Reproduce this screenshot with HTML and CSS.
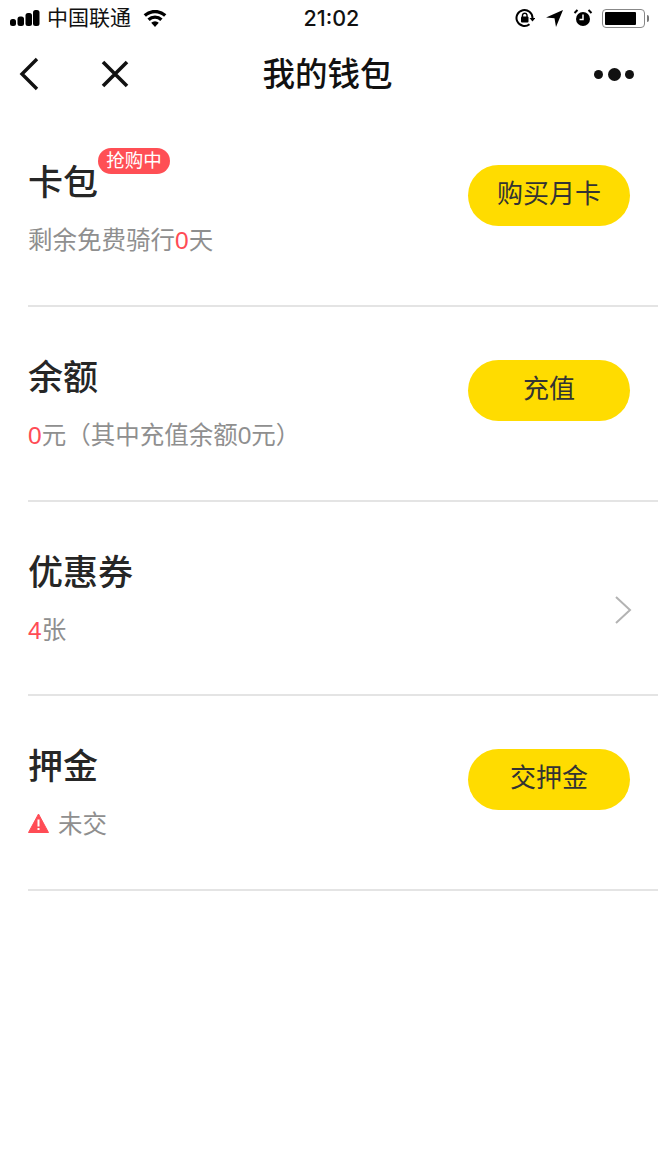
FILE: index.html
```html
<!DOCTYPE html>
<html lang="zh">
<head>
<meta charset="utf-8">
<title>我的钱包</title>
<link rel="stylesheet" href="styles.css">
</head>
<body>
<div class="status">
  <div class="status-left">
    <svg class="signal" width="34" height="16" viewBox="0 0 34 16"><rect x="0" y="9" width="6" height="7" rx="2.5"/><rect x="7.500" y="6.500" width="6.500" height="9.500" rx="2.500"/><rect x="15.500" y="3" width="6.500" height="13" rx="2.500"/><rect x="23" y="0" width="6.500" height="16" rx="2.500"/></svg>
    <span class="carrier">中国联通</span>
    <svg class="wifi" width="26" height="17" viewBox="0 0 26 18"><path d="M13 18l-4-4.600a5.800 5.800 0 0 1 8 0z"/><path d="M7.400 11.600 5 9a11.600 11.600 0 0 1 16 0l-2.400 2.600a8.200 8.200 0 0 0-11.200 0z"/><path d="M3.400 7.200 1 4.600a17.500 17.500 0 0 1 24 0l-2.400 2.600a14 14 0 0 0-19.200 0z"/></svg>
  </div>
  <span class="time">21:02</span>
  <div class="status-right">
    <svg width="20" height="20" viewBox="0 0 20 20"><path d="M17.500 10a8 8 0 1 0-3 6.200" fill="none" stroke="#000" stroke-width="2"/><path d="M14.500 10h6l-3 3.500z"/><rect x="6" y="8.500" width="7.500" height="6" rx="1"/><path d="M7.500 9V7a2.300 2.300 0 0 1 4.500 0v2" fill="none" stroke="#000" stroke-width="1.400"/></svg>
    <svg class="gap-loc" width="18" height="18" viewBox="0 0 18 18"><path d="M17 1 0 8.500l8.500.8L10 18z"/></svg>
    <svg class="gap-alarm" width="20" height="20" viewBox="0 0 20 20"><circle cx="10" cy="11" r="7"/><path d="M10 6.500V11.500H6.500" fill="none" stroke="#fff" stroke-width="1.500"/><path d="M1.500 5 4.500 2M18.500 5 15.500 2" stroke="#000" stroke-width="2"/></svg>
    <div class="battery"><div class="battery-fill"></div></div>
    <div class="battery-tip"></div>
  </div>
</div>

<nav class="nav">
  <div class="nav-icons">
    <svg width="22" height="34" viewBox="0 0 22 34"><path d="M19 2 4 17l15 15" fill="none" stroke="#111" stroke-width="3.400"/></svg>
    <svg class="close" width="30" height="30" viewBox="0 0 30 30"><path d="M3 3l24 24M27 3 3 27" fill="none" stroke="#111" stroke-width="3.600"/></svg>
  </div>
  <h1 class="nav-title">我的钱包</h1>
  <div class="dots"><i class="dot"></i><i class="dot dot-big"></i><i class="dot"></i></div>
</nav>

<section class="row">
  <div class="info">
    <div class="name name-badged">卡包<span class="badge">抢购中</span></div>
    <div class="sub">剩余免费骑行<span class="red">0</span>天</div>
  </div>
  <button class="btn">购买月卡</button>
</section>

<section class="row">
  <div class="info">
    <div class="name">余额</div>
    <div class="sub"><span class="red">0</span>元（其中充值余额0元）</div>
  </div>
  <button class="btn">充值</button>
</section>

<section class="row">
  <div class="info">
    <div class="name">优惠券</div>
    <div class="sub"><span class="red">4</span>张</div>
  </div>
  <svg class="chevron" width="20" height="30" viewBox="0 0 20 30"><path d="M3 2l14 13L3 28" fill="none" stroke="#b3b3b3" stroke-width="2"/></svg>
</section>

<section class="row">
  <div class="info">
    <div class="name">押金</div>
    <div class="sub sub-warn">
      <svg width="21" height="20" viewBox="0 0 21 20"><path d="M10.500 1 20.500 19.500H.5z" fill="#ff4c55" stroke="#ff4c55" stroke-linejoin="round"/><path d="M10.500 6.500v7M10.500 15v2" stroke="#fff" stroke-width="2"/></svg>
      <span>未交</span>
    </div>
  </div>
  <button class="btn">交押金</button>
</section>
</body>
</html>
```

FILE: styles.css
```css
* { box-sizing: border-box; }
html, body { margin: 0; padding: 0; }
body {
  width: 658px;
  height: 1170px;
  background: #fff;
  overflow: hidden;
  font-family: "Liberation Sans", "Noto Sans CJK SC", sans-serif;
  color: #222;
}
.status {
  height: 36px;
  display: flex;
  align-items: center;
  justify-content: space-between;
  padding: 0 9px 0 10px;
  position: relative;
}
.status svg { display: block; fill: #000; }
.status-left { display: flex; align-items: center; }
.carrier { font-size: 21px; margin-left: 3px; color: #111; line-height: 36px; }
.wifi { margin-left: 11px; }
.time {
  position: absolute;
  left: 303.500px;
  font-family: "Inter", "Liberation Sans", sans-serif;
  font-size: 21.500px;
  font-weight: 500;
  color: #111;
}
.status-right { display: flex; align-items: center; }
.gap-loc { margin-left: 11px; }
.gap-alarm { margin-left: 9px; }
.battery {
  margin-left: 9px;
  width: 43px;
  height: 19px;
  border: 1.500px solid #888;
  border-radius: 4px;
  padding: 2px;
}
.battery-fill { width: 31px; height: 100%; background: #000; border-radius: 1px; }
.battery-tip {
  width: 2px;
  height: 7px;
  margin-left: 2px;
  background: #777;
  border-radius: 0 2px 2px 0;
}
.nav {
  height: 76px;
  position: relative;
  display: flex;
  align-items: center;
  justify-content: space-between;
  padding: 0 24px 0 18px;
}
.nav-icons { display: flex; align-items: center; }
.close { margin-left: 60px; }
.nav-title {
  position: absolute;
  left: 0;
  right: 3px;
  top: 15px;
  margin: 0;
  text-align: center;
  font-size: 32.500px;
  line-height: 48px;
  font-weight: 500;
  color: #111;
}
.dots { display: flex; align-items: center; gap: 4.500px; }
.dot { width: 9px; height: 9px; border-radius: 50%; background: #111; display: block; }
.dot-big { width: 13px; height: 13px; }
.row {
  height: 194.800px;
  margin-left: 28px;
  border-bottom: 2px solid #e4e4e4;
  padding-right: 28px;
  position: relative;
  display: flex;
  justify-content: space-between;
  align-items: flex-start;
}
.info { padding-top: 45px; }
.name {
  font-size: 35px;
  line-height: 52px;
  font-weight: 500;
  color: #262626;
}
.name-badged { position: relative; width: max-content; }
.badge {
  position: absolute;
  left: 70px;
  top: -9px;
  width: 72px;
  height: 26px;
  border-radius: 13px;
  background: #ff4f55;
  color: #fff;
  font-size: 18.500px;
  font-weight: 400;
  line-height: 25px;
  text-align: center;
}
.sub {
  margin-top: 14px;
  font-size: 24.500px;
  line-height: 36px;
  color: #8f8f8f;
}
.red { color: #ff4c55; }
.sub-warn { display: flex; align-items: center; }
.sub-warn svg { margin-right: 9px; margin-bottom: 4px; }
.btn {
  margin-top: 53px;
  width: 162px;
  height: 61px;
  border: 0;
  border-radius: 31px;
  background: #ffdc00;
  color: #333;
  font-family: inherit;
  font-size: 26px;
  line-height: 56px;
  padding: 0 0 3px;
}
.chevron { margin-top: 93px; margin-right: -3px; }
```
